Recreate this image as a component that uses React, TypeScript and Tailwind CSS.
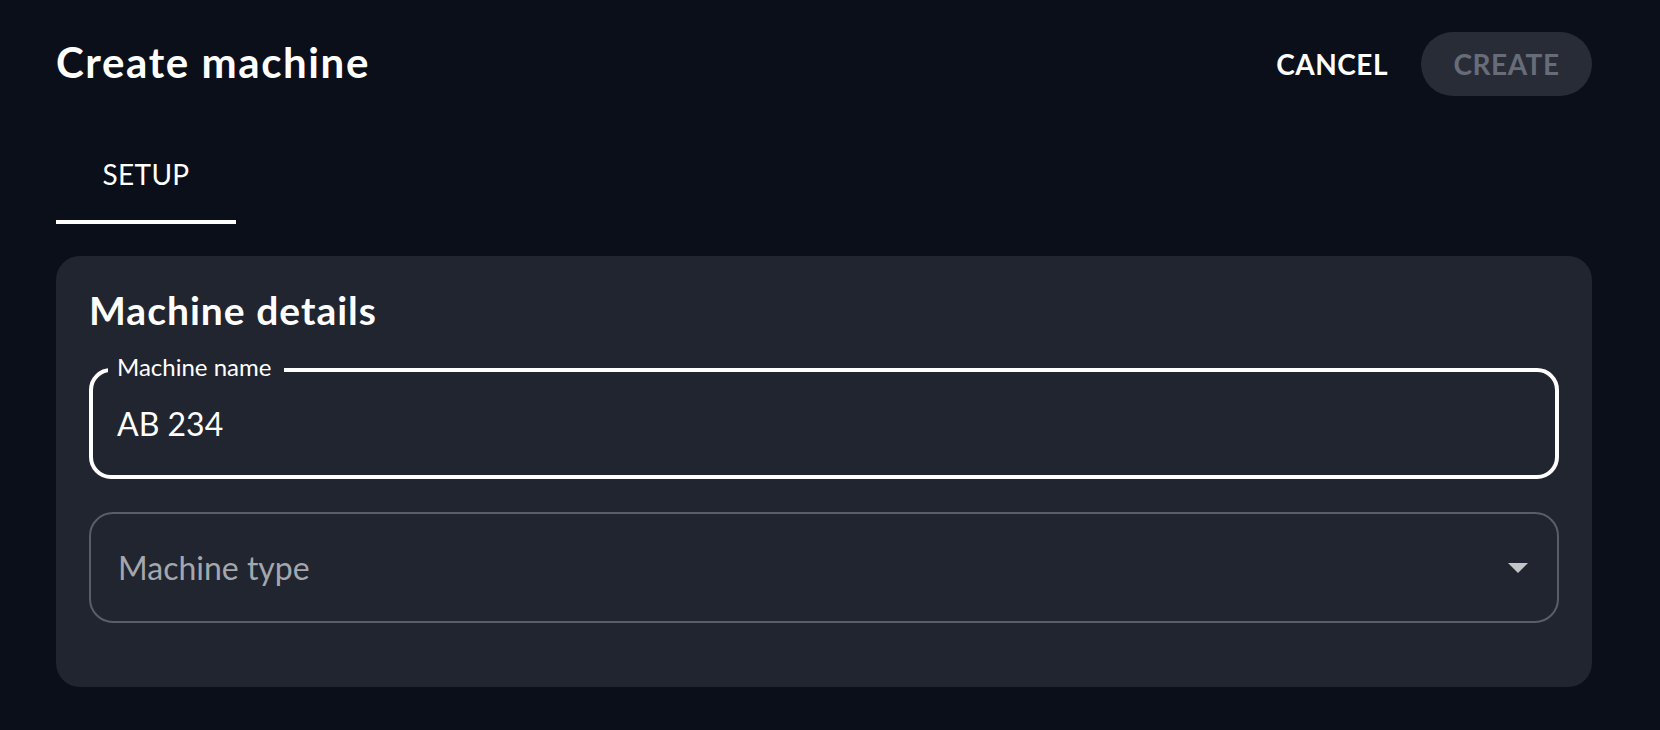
import React from "react";

const font = { fontFamily: "Lato, 'Noto Sans', 'Open Sans', sans-serif" };

function CaretDown() {
  return (
    <svg width="20" height="10" viewBox="0 0 20 10" className="shrink-0">
      <path d="M0 0h20L10 10z" fill="#c4c5c8" />
    </svg>
  );
}

export default function App() {
  return (
    <div
      style={font}
      className="min-h-[730px] w-full bg-[#0a0f1a] pl-[56px] pr-[68px] text-white"
    >
      {/* Header */}
      <div className="flex h-[128px] items-center justify-between">
        <h1 className="pb-[4px] text-[42px] font-bold leading-[1.2] tracking-[1.6px]">
          Create machine
        </h1>
        <div className="flex items-center gap-[17px]">
          <button className="px-[16px] py-[10px] text-[28px] font-bold leading-none tracking-[0.5px] text-white">
            CANCEL
          </button>
          <button
            disabled
            className="flex h-[64px] w-[171px] items-center justify-center rounded-full bg-[#282c37] text-[28px] font-bold leading-none tracking-[0.5px] text-[#686c78]"
          >
            CREATE
          </button>
        </div>
      </div>

      {/* Tabs */}
      <div className="flex h-[96px]">
        <div className="flex w-[180px] flex-col">
          <div className="flex flex-1 items-center justify-center text-[28px] leading-none tracking-[0.3px]">
            SETUP
          </div>
          <div className="h-[4px] bg-white" />
        </div>
      </div>

      {/* Card */}
      <div className="mt-[32px] rounded-[24px] bg-[#21252f] px-[33px] pb-[64px] pt-[30px]">
        <h2 className="text-[39px] font-bold leading-[48px] tracking-[1px]">Machine details</h2>

        {/* Machine name (focused) */}
        <div className="relative mt-[34px] flex h-[111px] items-center rounded-[22px] border-[4px] border-white px-[24px]">
          <span className="absolute left-[15px] top-[-17px] bg-[#21252f] pl-[9px] pr-[13px] text-[24px] leading-[24px] text-white">
            Machine name
          </span>
          <span className="text-[32px] leading-none text-white">AB 234</span>
        </div>

        {/* Machine type (select) */}
        <div className="mt-[33px] flex h-[111px] items-center justify-between rounded-[24px] border-[2px] border-[#5a5e67] pl-[27px] pr-[29px]">
          <span className="text-[32px] leading-none text-[#a4a7ad]">Machine type</span>
          <CaretDown />
        </div>
      </div>
    </div>
  );
}
